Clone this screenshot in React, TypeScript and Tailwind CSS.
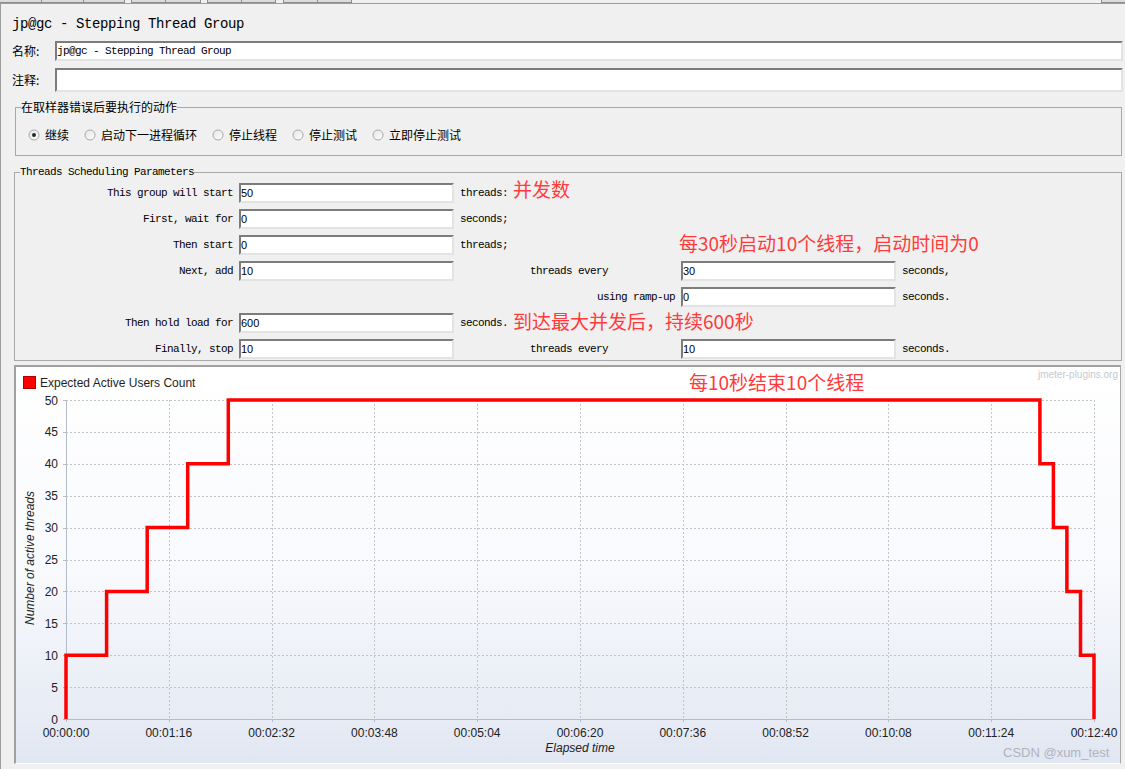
import React from "react";

const mono = "font-['Liberation_Mono',monospace] text-[11px] tracking-[-0.6px]";
const cjk = "font-['Noto_Sans_CJK_SC',sans-serif]";
const red = "font-['Noto_Sans_CJK_SC',sans-serif] text-[19px] leading-[20px] text-[#ff3b3b] whitespace-nowrap";

const Field = ({ v }: { v: string }) => (
  <div className="h-[20px] w-[215px] bg-white border-2 border-t-[#7c7c7c] border-l-[#7c7c7c] border-r-[#e3e3e3] border-b-[#e3e3e3] flex items-center text-[11px] leading-none text-black font-['Liberation_Sans',sans-serif]">
    {v}
  </div>
);

const Lbl = ({ t, right }: { t: string; right?: boolean }) => (
  <div className={`${mono} leading-[20px] whitespace-nowrap text-black ${right ? "text-right" : ""}`}>{t}</div>
);

const Radio = ({ on, label }: { on?: boolean; label: string }) => (
  <div className="flex items-center">
    <svg width="12" height="12" viewBox="0 0 12 12" className="mr-[5px]">
      <defs>
        <linearGradient id={`rg${label}`} x1="0" y1="0" x2="1" y2="1">
          <stop offset="0" stopColor="#e4e4e4" />
          <stop offset="1" stopColor="#ffffff" />
        </linearGradient>
      </defs>
      <circle cx="6" cy="6" r="5" fill={`url(#rg${label})`} stroke="#a9a9a9" strokeWidth="1" />
      {on && <circle cx="6" cy="6" r="2" fill="#2a2a2a" />}
    </svg>
    <span className={`${cjk} text-[12px] leading-[20px] text-black`}>{label}</span>
  </div>
);

const X0 = 66;
const X1 = 1094;
const Y0 = 719;
const Y50 = 400;
const xs = Array.from({ length: 11 }, (_, i) => X0 + ((X1 - X0) * i) / 10);
const ys = Array.from({ length: 11 }, (_, i) => Y0 - ((Y0 - Y50) * i) / 10);
const xLabels = [
  "00:00:00",
  "00:01:16",
  "00:02:32",
  "00:03:48",
  "00:05:04",
  "00:06:20",
  "00:07:36",
  "00:08:52",
  "00:10:08",
  "00:11:24",
  "00:12:40",
];

const pxPerSec = (X1 - X0) / 760;
const vy = (v: number) => Y0 - ((Y0 - Y50) * v) / 50;
const tx = (s: number) => X0 + s * pxPerSec;

const stepPts: [number, number][] = (() => {
  const pts: [number, number][] = [[tx(0), vy(0)]];
  let t = 0;
  for (let v = 10; v <= 50; v += 10) {
    pts.push([tx(t), vy(v)]);
    if (v < 50) {
      t += 30;
      pts.push([tx(t), vy(v)]);
    }
  }
  t += 600;
  pts.push([tx(t), vy(50)]);
  for (let v = 40; v >= 0; v -= 10) {
    pts.push([tx(t), vy(v)]);
    if (v > 0) {
      t += 10;
      pts.push([tx(t), vy(v)]);
    }
  }
  return pts;
})();

const Chart = () => {
  const ff = "Liberation Sans, Arial, sans-serif";
  return (
    <svg width="1104" height="396" viewBox="16 367 1104 396" className="block">
      {xs.slice(1).map((x, i) => (
        <line key={`vx${i}`} x1={Math.round(x) + 0.5} x2={Math.round(x) + 0.5} y1={Y50} y2={Y0} stroke="#c4c4c4" strokeDasharray="2 2" />
      ))}
      {ys.slice(1).map((y, i) => (
        <line key={`hy${i}`} x1={X0} x2={X1} y1={Math.round(y) + 0.5} y2={Math.round(y) + 0.5} stroke="#c4c4c4" strokeDasharray="2 2" />
      ))}
      <line x1={X0 + 0.5} x2={X0 + 0.5} y1={Y50} y2={Y0 + 3} stroke="#b3bccb" />
      <line x1={X0 - 3} x2={X1} y1={Y0 + 0.5} y2={Y0 + 0.5} stroke="#b3bccb" />
      {ys.map((y, i) => (
        <line key={`ty${i}`} x1={X0 - 3} x2={X0} y1={Math.round(y) + 0.5} y2={Math.round(y) + 0.5} stroke="#b3bccb" />
      ))}
      {xs.map((x, i) => (
        <line key={`tx${i}`} x1={Math.round(x) + 0.5} x2={Math.round(x) + 0.5} y1={Y0} y2={Y0 + 3} stroke="#b3bccb" />
      ))}
      {ys.map((y, i) => (
        <text key={`ly${i}`} x={58} y={y + 4.5} textAnchor="end" fontFamily={ff} fontSize="12" fill="#222">
          {i * 5}
        </text>
      ))}
      {xs.map((x, i) => (
        <text key={`lx${i}`} x={x} y={737} textAnchor="middle" fontFamily={ff} fontSize="12" fill="#222">
          {xLabels[i]}
        </text>
      ))}
      <text x={580} y={752} textAnchor="middle" fontFamily={ff} fontSize="12" fontStyle="italic" fill="#222">
        Elapsed time
      </text>
      <text x={34} y={558} textAnchor="middle" fontFamily={ff} fontSize="12" fontStyle="italic" fill="#222" transform="rotate(-90 34 558)">
        Number of active threads
      </text>
      <rect x={23.5} y={376.5} width={12} height={12} fill="#ff0000" stroke="#b00000" />
      <text x={40} y={386.5} fontFamily={ff} fontSize="12" fill="#1e1e1e">
        Expected Active Users Count
      </text>
      <text x={1118} y={378} textAnchor="end" fontFamily={ff} fontSize="10" fill="#c5c9d1">
        jmeter-plugins.org
      </text>
      <polyline
        points={stepPts.map((p) => `${p[0].toFixed(1)},${p[1].toFixed(1)}`).join(" ")}
        fill="none"
        stroke="#ff0000"
        strokeWidth="3.5"
        strokeLinejoin="miter"
      />
    </svg>
  );
};

export default function App() {
  return (
    <div className="w-[1125px] h-[769px] bg-[#f0f0f0] overflow-hidden">
      <div className="flex h-[3px]">
        <div className="w-[42px] bg-[#dcdcdc] border-r border-b border-[#8c8c8c]" />
        <div className="w-[42px] bg-[#dcdcdc] border-r border-b border-[#8c8c8c]" />
        <div className="w-[41px] bg-[#dcdcdc] border-r border-b border-[#8c8c8c]" />
        <div className="w-[6px]" />
        <div className="w-[35px] bg-[#dcdcdc] border-x border-b border-[#8c8c8c]" />
        <div className="w-[35px] bg-[#dcdcdc] border-r border-b border-[#8c8c8c]" />
        <div className="w-[6px]" />
        <div className="w-[35px] bg-[#dcdcdc] border-x border-b border-[#8c8c8c]" />
        <div className="w-[34px] bg-[#dcdcdc] border-r border-b border-[#8c8c8c]" />
        <div className="w-[7px]" />
        <div className="w-[35px] bg-[#dcdcdc] border-x border-b border-[#8c8c8c]" />
        <div className="w-[34px] bg-[#dcdcdc] border-r border-b border-[#8c8c8c]" />
        <div className="flex-1" />
        <div className="w-[24px] bg-[#dcdcdc] border-l border-b border-[#8c8c8c]" />
      </div>

      <div className="border-t border-l border-[#9d9d9d] h-[766px]">
        <div className="pt-[12px] pl-[11px] font-['Liberation_Mono',monospace] text-[14px] tracking-[-0.4px] leading-[16px] text-black">
          jp@gc - Stepping Thread Group
        </div>

        <div className="mt-[9px] flex items-center pl-[11px] pr-[2px]">
          <div className={`${cjk} text-[12px] w-[43px] text-black`}>名称:</div>
          <div className={`flex-1 h-[20px] bg-white border-2 border-t-[#7c7c7c] border-l-[#7c7c7c] border-r-[#e3e3e3] border-b-[#e3e3e3] flex items-center ${mono} text-black`}>
            jp@gc - Stepping Thread Group
          </div>
        </div>

        <div className="mt-[7px] flex items-center pl-[11px] pr-[2px]">
          <div className={`${cjk} text-[12px] w-[43px] text-black`}>注释:</div>
          <div className="flex-1 h-[24px] bg-white border-2 border-t-[#7c7c7c] border-l-[#7c7c7c] border-r-[#e3e3e3] border-b-[#e3e3e3]" />
        </div>

        <fieldset className="mt-[8px] ml-[14px] mr-[3px] border border-[#a8a8a8] pb-[10px]">
          <legend className={`${cjk} ml-[5px] text-[12px] leading-[14px] text-black`}>在取样器错误后要执行的动作</legend>
          <div className="mt-[11px] pl-[12px] flex items-center gap-[15px] h-[20px]">
            <Radio on label="继续" />
            <Radio label="启动下一进程循环" />
            <Radio label="停止线程" />
            <Radio label="停止测试" />
            <Radio label="立即停止测试" />
          </div>
        </fieldset>

        <fieldset className="mt-[10px] ml-[13px] mr-[3px] border border-[#a8a8a8] pt-[5px] pb-[1px]">
          <legend className={`${mono} ml-[5px] leading-[12px] text-black`}>Threads Scheduling Parameters</legend>
          <div className="grid grid-cols-[218px_215px_64px_145px_215px_1fr] gap-x-[6px] gap-y-[6px] auto-rows-[20px]">
            <Lbl t="This group will start" right />
            <Field v="50" />
            <div className="flex items-center whitespace-nowrap">
              <Lbl t="threads:" />
              <span className={`${red} ml-[5px] relative -top-[4px]`}>并发数</span>
            </div>
            <div />
            <div />
            <div />

            <Lbl t="First, wait for" right />
            <Field v="0" />
            <Lbl t="seconds;" />
            <div />
            <div />
            <div />

            <Lbl t="Then start" right />
            <Field v="0" />
            <Lbl t="threads;" />
            <div />
            <div className="whitespace-nowrap">
              <span className={`${red} relative -top-[2px] -left-[2px]`}>每30秒启动10个线程，启动时间为0</span>
            </div>
            <div />

            <Lbl t="Next, add" right />
            <Field v="10" />
            <div />
            <Lbl t="threads every" />
            <Field v="30" />
            <Lbl t="seconds," />

            <div />
            <div />
            <div />
            <Lbl t="using ramp-up" right />
            <Field v="0" />
            <Lbl t="seconds." />

            <Lbl t="Then hold load for" right />
            <Field v="600" />
            <div className="flex items-center whitespace-nowrap">
              <Lbl t="seconds." />
              <span className={`${red} ml-[5px] relative -top-[2px]`}>到达最大并发后，持续600秒</span>
            </div>
            <div />
            <div />
            <div />

            <Lbl t="Finally, stop" right />
            <Field v="10" />
            <div />
            <Lbl t="threads every" />
            <Field v="10" />
            <Lbl t="seconds." />
          </div>
        </fieldset>

        <div className="relative mt-[4px] ml-[13px] w-[1107px] h-[399px] border-l-2 border-t-2 border-r border-b border-l-[#a0a0a0] border-t-[#a0a0a0] border-r-[#a8a8a8] border-b-[#ffffff] bg-linear-to-b from-white via-[#f9fafd] to-[#e1e7f2]">
          <Chart />
          <span className={`${red} absolute left-[673px] top-[5px]`}>每10秒结束10个线程</span>
          <span className="absolute left-[987px] top-[378px] font-['Liberation_Sans',sans-serif] text-[13px] leading-[16px] text-[#afb4bd] whitespace-nowrap">
            CSDN @xum_test
          </span>
        </div>
      </div>
    </div>
  );
}
